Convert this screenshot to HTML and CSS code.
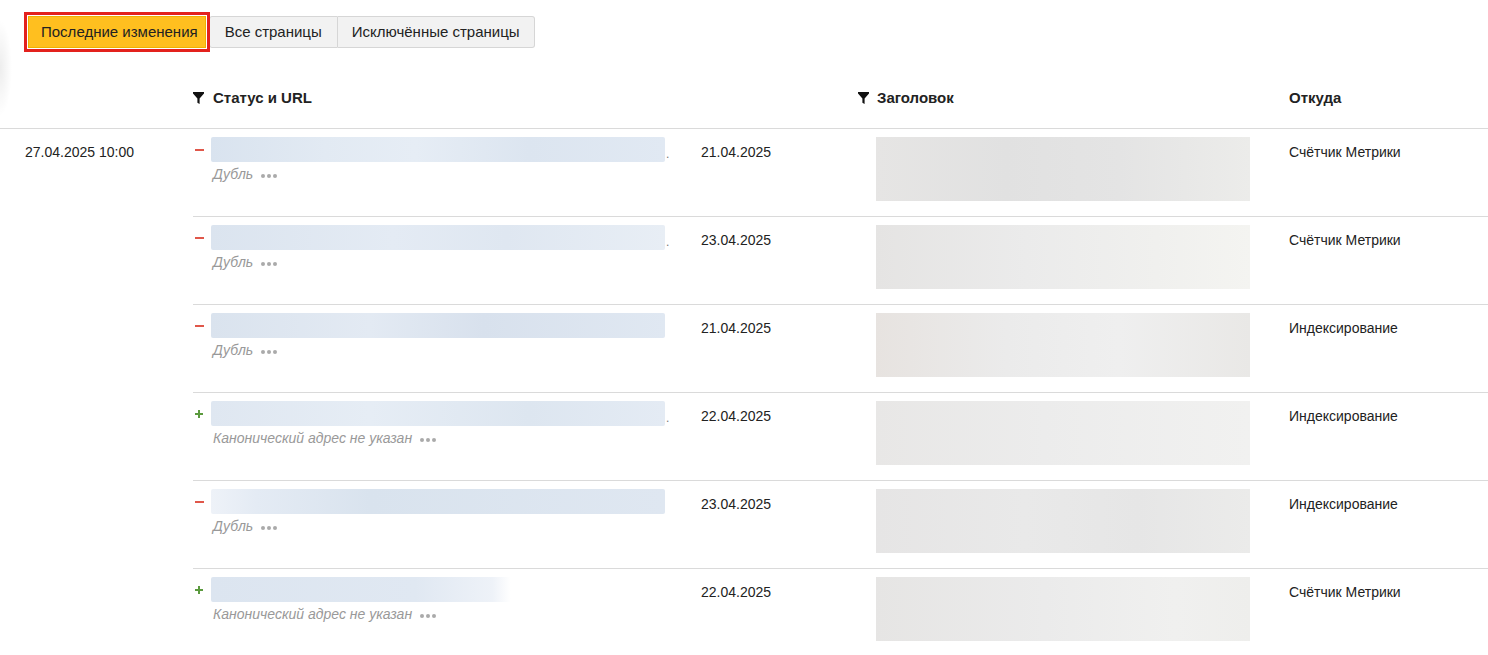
FILE: index.html
```html
<!DOCTYPE html>
<html lang="ru">
<head>
<meta charset="utf-8">
<title>Страницы в поиске</title>
<link rel="stylesheet" href="styles.css">
</head>
<body>
<div class="page">
  <div class="tabs">
    <button class="tab tab-active">Последние изменения</button>
    <button class="tab tab-mid">Все страницы</button>
    <button class="tab tab-last">Исключённые страницы</button>
  </div>

  <div class="thead">
    <div class="th th-empty"></div>
    <div class="th th-status">
      <svg class="filter" viewBox="0 0 11 12" width="11" height="12"><path d="M0 0H11V1.6L6.6 6.4V12L4.4 10.8V6.4L0 1.6Z" fill="#111"/></svg>
      <span>Статус и URL</span>
    </div>
    <div class="th"></div>
    <div class="th th-title">
      <svg class="filter" viewBox="0 0 11 12" width="11" height="12"><path d="M0 0H11V1.6L6.6 6.4V12L4.4 10.8V6.4L0 1.6Z" fill="#111"/></svg>
      <span>Заголовок</span>
    </div>
    <div class="th th-source">Откуда</div>
  </div>

  <div class="group">
    <div class="group-date">27.04.2025 10:00</div>
    <div class="rows">
      <div class="row">
        <div class="cell-status">
          <div class="url-line"><span class="sign minus"></span><span class="url-blur u1"></span><span class="tail">.</span></div>
          <div class="sub"><span>Дубль</span><span class="more"><i></i><i></i><i></i></span></div>
        </div>
        <div class="cell-date">21.04.2025</div>
        <div class="cell-title"><span class="title-blur t1"></span></div>
        <div class="cell-source">Счётчик Метрики</div>
      </div>
      <div class="row">
        <div class="cell-status">
          <div class="url-line"><span class="sign minus"></span><span class="url-blur u2"></span><span class="tail">.</span></div>
          <div class="sub"><span>Дубль</span><span class="more"><i></i><i></i><i></i></span></div>
        </div>
        <div class="cell-date">23.04.2025</div>
        <div class="cell-title"><span class="title-blur t2"></span></div>
        <div class="cell-source">Счётчик Метрики</div>
      </div>
      <div class="row">
        <div class="cell-status">
          <div class="url-line"><span class="sign minus"></span><span class="url-blur u3"></span></div>
          <div class="sub"><span>Дубль</span><span class="more"><i></i><i></i><i></i></span></div>
        </div>
        <div class="cell-date">21.04.2025</div>
        <div class="cell-title"><span class="title-blur t3"></span></div>
        <div class="cell-source">Индексирование</div>
      </div>
      <div class="row">
        <div class="cell-status">
          <div class="url-line"><span class="sign plus"></span><span class="url-blur u4"></span><span class="tail">.</span></div>
          <div class="sub"><span>Канонический адрес не указан</span><span class="more"><i></i><i></i><i></i></span></div>
        </div>
        <div class="cell-date">22.04.2025</div>
        <div class="cell-title"><span class="title-blur t4"></span></div>
        <div class="cell-source">Индексирование</div>
      </div>
      <div class="row">
        <div class="cell-status">
          <div class="url-line"><span class="sign minus"></span><span class="url-blur u5"></span></div>
          <div class="sub"><span>Дубль</span><span class="more"><i></i><i></i><i></i></span></div>
        </div>
        <div class="cell-date">23.04.2025</div>
        <div class="cell-title"><span class="title-blur t5"></span></div>
        <div class="cell-source">Индексирование</div>
      </div>
      <div class="row row-last">
        <div class="cell-status">
          <div class="url-line"><span class="sign plus"></span><span class="url-blur u6"></span></div>
          <div class="sub"><span>Канонический адрес не указан</span><span class="more"><i></i><i></i><i></i></span></div>
        </div>
        <div class="cell-date">22.04.2025</div>
        <div class="cell-title"><span class="title-blur t6"></span></div>
        <div class="cell-source">Счётчик Метрики</div>
      </div>
    </div>
  </div>
</div>
</body>
</html>
```

FILE: styles.css
```css
* { box-sizing: border-box; }

html, body {
  margin: 0;
  padding: 0;
  background: #fff;
}

body {
  font-family: "Liberation Sans", Arial, sans-serif;
  font-size: 14px;
  color: #222;
  overflow: hidden;
  background:
    radial-gradient(ellipse 12px 48px at 0 68px, rgba(0,0,0,0.07), rgba(0,0,0,0) 100%),
    #fff;
}

.page {
  width: 1488px;
}

/* Tabs */
.tabs {
  display: flex;
  padding: 16px 0 0 28px;
  height: 48px;
}

.tab {
  font-family: inherit;
  font-size: 15px;
  color: #222;
  height: 32px;
  padding: 0 15px;
  background: #f2f2f2;
  border: 1px solid #d6d6d6;
  margin: 0;
  line-height: 30px;
  cursor: pointer;
}

.tab-active {
  position: relative;
  z-index: 1;
  background: #ffbf1f;
  border-color: #f0b000;
  padding: 0 7px 0 12px;
  margin-right: 3px;
  outline: 3px solid #e3211d;
  outline-offset: 1px;
}

.tab-mid {
  border-radius: 3px 0 0 3px;
}

.tab-last {
  padding: 0 14px;
  border-radius: 0 3px 3px 0;
  border-left: none;
}

/* Header */
.thead {
  display: grid;
  grid-template-columns: 193px 508px 175px 413px 1fr;
  height: 81px;
  border-bottom: 1px solid #dadada;
  padding-top: 42px;
}

.th {
  font-size: 15px;
  font-weight: bold;
  line-height: 16px;
  height: 16px;
  display: flex;
  align-items: center;
  gap: 9px;
}

.th-title {
  margin-left: -18px;
  gap: 8px;
}

.filter {
  flex: none;
  display: block;
}

/* Body */
.group {
  display: grid;
  grid-template-columns: 193px 1fr;
}

.group-date {
  padding: 15px 0 0 25px;
  line-height: 16px;
}

.row {
  display: grid;
  grid-template-columns: 508px 175px 413px 1fr;
  height: 88px;
  border-bottom: 1px solid #dadada;
}

.row-last {
  border-bottom: none;
}

.cell-status {
  padding-top: 8px;
}

.url-line {
  display: flex;
  align-items: center;
  height: 25px;
}

.sign {
  width: 18px;
  height: 25px;
  flex: none;
  position: relative;
}

.sign.minus::before {
  content: "";
  position: absolute;
  left: 2px;
  top: 12px;
  width: 9px;
  height: 2px;
  background: #e0574a;
}

.sign.plus::before,
.sign.plus::after {
  content: "";
  position: absolute;
  background: #5b9a3e;
}

.sign.plus::before {
  left: 2px;
  top: 12px;
  width: 8px;
  height: 2px;
}

.sign.plus::after {
  left: 5px;
  top: 9px;
  width: 2px;
  height: 8px;
}

.url-blur {
  display: block;
  width: 454px;
  height: 25px;
  border-radius: 2px;
  background: linear-gradient(90deg, #d9e3ef 0%, #e2eaf3 25%, #e6edf5 45%, #dce5f0 70%, #e1e9f3 100%);
}

.u2 { background: linear-gradient(90deg, #dbe4ef 0%, #e4ebf4 40%, #dfe7f1 65%, #e8eef5 100%); }
.u3 { background: linear-gradient(90deg, #dae3ee 0%, #e3eaf3 35%, #d8e1ed 60%, #e0e8f2 100%); }
.u4 { background: linear-gradient(90deg, #dfe7f1 0%, #e6edf5 35%, #dde6f0 70%, #e4ebf4 100%); }
.u5 { background: linear-gradient(90deg, #eef2f8 0%, #e4ebf4 10%, #d9e3ee 35%, #dfe7f1 100%); }
.u6 { background: linear-gradient(90deg, #dce5f0 0%, #e0e8f2 45%, #eef2f8 62%, #ffffff 66%, #ffffff 100%); }

.tail {
  color: #777;
  font-size: 12px;
  line-height: 12px;
  margin: 8px 0 0 1px;
}

.sub {
  display: flex;
  align-items: center;
  gap: 8px;
  margin: 4px 0 0 20px;
  font-style: italic;
  color: #999;
  line-height: 16px;
}

.more {
  display: flex;
  gap: 2px;
  padding-top: 3px;
}

.more i {
  display: block;
  width: 4px;
  height: 4px;
  border-radius: 50%;
  background: #aaa;
}

.cell-date,
.cell-source {
  padding-top: 15px;
  line-height: 16px;
}

.cell-title {
  padding-top: 8px;
}

.title-blur {
  display: block;
  width: 374px;
  height: 64px;
  background: linear-gradient(90deg, #e6e5e4 0%, #e1e1e1 35%, #e4e4e4 65%, #ececea 100%);
}

.t2 { background: linear-gradient(90deg, #e5e4e3 0%, #ebebeb 40%, #f0f0ee 75%, #f4f4f1 100%); }
.t3 { background: linear-gradient(90deg, #e7e3e0 0%, #ebebeb 35%, #efefef 65%, #e9e8e6 100%); }
.t4 { background: linear-gradient(90deg, #e8e7e6 0%, #ececec 45%, #f1f1f0 100%); }
.t5 { background: linear-gradient(90deg, #e6e5e5 0%, #e9e9e9 40%, #e6e6e6 70%, #ebebea 100%); }
.t6 { background: linear-gradient(90deg, #e6e5e4 0%, #ebebeb 45%, #f0f0ef 80%, #eeeeec 100%); }
```
